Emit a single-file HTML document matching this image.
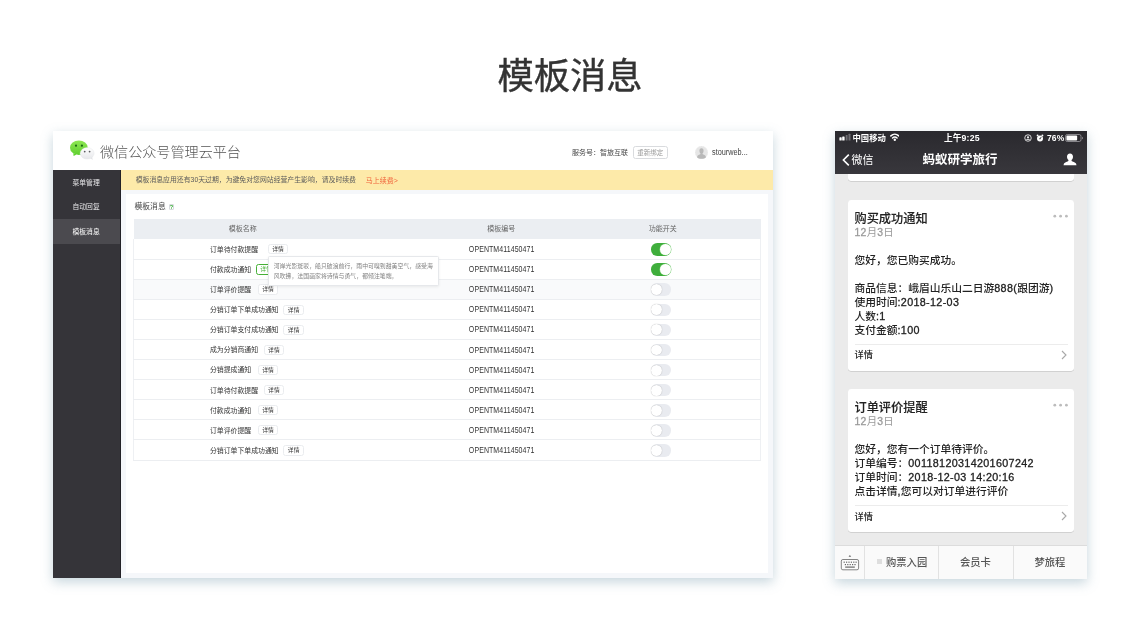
<!DOCTYPE html>
<html lang="zh-CN">
<head>
<meta charset="utf-8">
<title>模板消息</title>
<style>
*{box-sizing:border-box;margin:0;padding:0}
html,body{width:1140px;height:638px;overflow:hidden;background:#fff}
body{position:relative;font-family:"Liberation Sans","Noto Sans CJK SC",sans-serif;color:#333;-webkit-text-size-adjust:none}
.abs{position:absolute}
.t{position:absolute;white-space:nowrap;line-height:1}
h1.title{will-change:transform;position:absolute;left:0;width:1140px;top:50.7px;text-align:center;font-family:"Noto Sans CJK SC","Liberation Sans",sans-serif;font-weight:400;-webkit-text-stroke:.4px #333;font-size:36.3px;line-height:44px;color:#333;letter-spacing:0}
/* ---------- admin panel ---------- */
#admin{will-change:transform;position:absolute;left:53px;top:131px;width:720px;height:447px;background:#f5f7fa;box-shadow:0 4px 11px rgba(100,140,160,.36)}
#admin .hdr{position:absolute;left:0;top:0;width:720px;height:39px;background:#fff}
#admin .side{position:absolute;left:0;top:39px;width:68.2px;height:408px;background:#353439;border-right:0.8px solid #232227}
#admin .side div{height:24.5px;line-height:24.5px;padding:0.8px 1px 0 0;text-align:center;color:#e8e8ea;font-size:6.8px}
#admin .side div.on{background:#4b4a4f;color:#fff}
#admin .banner{position:absolute;left:68.2px;top:39px;width:651.8px;height:19.5px;background:#fdeaa9}
#admin .card{position:absolute;left:73px;top:62.7px;width:642.4px;height:379px;background:#fff}
.sm{font-size:7px}
table.tb{position:absolute;left:80.3px;top:88px;width:627.2px;table-layout:fixed;border-collapse:collapse;font-size:7px;color:#333}
table.tb th{height:20px;padding-bottom:2px;background:#ebeef2;font-weight:400;color:#666;text-align:center}
table.tb td{height:20.1px;padding-top:1px;border-bottom:1px solid #eceef1;text-align:center;vertical-align:middle}
table.tb tr.alt td{background:#f9fafb}
table.tb td.sc{padding-right:1.5px}
table.tb td.c2,table.tb th.c2{padding-left:10px}
table.tb th{white-space:nowrap}
table.tb td.nm{text-align:left;padding-left:75.7px;font-size:6.88px;border-left:1px solid #eef0f3}
table.tb td.e{border-right:1px solid #eef0f3}
.btn{display:inline-block;border:0.6px solid #eaecef;border-radius:2.5px;font-size:5.8px;line-height:8.4px;padding:0 3.4px;margin-left:6.5px;color:#333;background:#fff;vertical-align:middle;position:relative;top:-0.6px}
.btn.g{border-color:#45b035;color:#45b035}
.op{display:inline-block;transform:translate(.4px,-.5px) scaleY(1.24);letter-spacing:.08px}
.sw{display:inline-block;width:20.5px;height:12.5px;border-radius:6.25px;background:#e9ebf0;position:relative;vertical-align:middle}
.sw i{position:absolute;left:0.7px;top:0.8px;width:10.9px;height:10.9px;border-radius:50%;background:#fff;box-shadow:0 0 1px rgba(0,0,0,.35)}
.sw.on{background:#3fae3c}
.sw.on i{left:auto;right:0.7px;box-shadow:0 0 0 .5px #7fd07a}
/* ---------- phone ---------- */
#phone{will-change:transform;position:absolute;left:835px;top:131px;width:252px;height:447.5px;background:#ebebeb;overflow:hidden;box-shadow:0 4px 11px rgba(100,140,160,.36)}
#phone .top{position:absolute;left:0;top:0;width:252px;height:43px;background:linear-gradient(#2a292e,#38373c)}
#phone .pc{position:absolute;left:13px;width:226px;background:#fff;border-radius:3px;box-shadow:0 0.4px 0.6px rgba(0,0,0,.22)}
#phone .bar{position:absolute;left:0;top:414px;width:252px;height:33.5px;background:#fafafa;border-top:0.5px solid #dcdcdc}
#phone .bar .dv{position:absolute;top:0;width:1px;height:33.5px;background:#e2e2e2}
.pt{font-family:"Liberation Sans","Noto Sans CJK SC",sans-serif}
.n{letter-spacing:.34px;-webkit-text-stroke:.3px}
</style>
</head>
<body>
<h1 class="title">模板消息</h1>

<div id="admin">
  <div class="hdr">
    <svg class="abs" style="left:0;top:0" width="60" height="39" viewBox="0 0 60 39">
      <defs>
        <linearGradient id="gg" x1="0" y1="0" x2="0" y2="1"><stop offset="0" stop-color="#8ee653"/><stop offset="1" stop-color="#60d030"/></linearGradient>
        <linearGradient id="gw" x1="0" y1="0" x2="0" y2="1"><stop offset="0" stop-color="#ffffff"/><stop offset="1" stop-color="#e6e7ea"/></linearGradient>
      </defs>
      <path d="M20.300 22l0.300 3 2.900-1.600z" fill="#62d132"/>
      <ellipse cx="25.850" cy="16.700" rx="8.850" ry="7.200" fill="url(#gg)"/>
      <circle cx="23" cy="14.700" r="1.100" fill="#1c6a14"/><circle cx="28.900" cy="14.700" r="1.100" fill="#1c6a14"/>
      <path d="M37 27l2.700 2 -0.600-3.500z" fill="#e3e4e7"/>
      <ellipse cx="34.150" cy="22.300" rx="7" ry="5.800" fill="url(#gw)" stroke="#dfe1e4" stroke-width=".35"/>
      <circle cx="31.700" cy="20.600" r=".9" fill="#5b5d60"/><circle cx="36.600" cy="20.600" r=".9" fill="#5b5d60"/>
    </svg>
    <div class="t" style="left:47px;top:12.500px;font-size:14.100px;font-weight:300;color:#555;font-family:'Noto Sans CJK SC','Liberation Sans',sans-serif">微信公众号管理云平台</div>
    <div class="t sm" style="left:519px;top:18px;color:#444">服务号：智旅互联</div>
    <div class="t" style="left:580px;top:15px;width:34.500px;height:12.500px;border:0.600px solid #d9dbde;border-radius:2.500px;font-size:6.500px;line-height:11.500px;text-align:center;color:#999">重新绑定</div>
    <svg class="abs" style="left:642px;top:14.500px" width="13" height="13" viewBox="0 0 13 13">
      <circle cx="6.500" cy="6.500" r="6.400" fill="#e6e6e6"/>
      <circle cx="6.500" cy="6.500" r="6.200" fill="none" stroke="#efefef" stroke-width=".5"/>
      <ellipse cx="6.500" cy="5" rx="2.100" ry="2.700" fill="#b9b9b9"/>
      <path d="M2 11.200C2.300 9.100 4.700 9 5.500 8.100V6.800h2v1.300c.8 .9 3.200 1 3.500 3.100C9.200 13.300 3.800 13.300 2 11.200z" fill="#b9b9b9"/>
    </svg>
    <div class="t" style="left:659px;top:17.600px;font-size:7.300px;color:#444;transform:scaleY(1.12)">stourweb...</div>
  </div>

  <div class="side">
    <div>菜单管理</div>
    <div>自动回复</div>
    <div class="on">模板消息</div>
  </div>

  <div class="banner">
    <div class="t" style="left:14.500px;top:6.500px;font-size:6.860px;color:#5c5c5c">模板消息应用还有30天过期，为避免对您网站经营产生影响，请及时续费</div>
    <div class="t sm" style="left:244.500px;top:6.500px;color:#f0643c">马上续费&gt;</div>
  </div>

  <div class="card"></div>
  <div class="t" style="left:81.500px;top:71.700px;font-size:7.800px;color:#444">模板消息</div>
  <div class="t" style="left:115.500px;top:73px;width:5.800px;height:5.800px;border:0.600px solid #d5d8dc;border-radius:1px;font-size:5.600px;line-height:4.800px;text-align:center;color:#2fa82f;font-weight:700">?</div>

  <table class="tb">
    <colgroup><col style="width:218px"><col style="width:289px"><col style="width:42px"><col style="width:78px"></colgroup>
    <tr><th>模板名称</th><th class="c2">模板编号</th><th style="padding-left:2px">功能开关</th><th></th></tr>
    <tr><td class="nm">订单待付款提醒<span class="btn" style="margin-left:9.700px">详情</span></td><td class="c2"><span class="op">OPENTM411450471</span></td><td class="sc"><span class="sw on"><i></i></span></td><td class="e"></td></tr>
    <tr><td class="nm">付款成功通知<span class="btn g" style="margin-left:4.700px">详情</span></td><td class="c2"><span class="op">OPENTM411450471</span></td><td class="sc"><span class="sw on"><i></i></span></td><td class="e"></td></tr>
    <tr class="alt"><td class="nm">订单评价提醒<span class="btn">详情</span></td><td class="c2"><span class="op">OPENTM411450471</span></td><td class="sc"><span class="sw"><i></i></span></td><td class="e"></td></tr>
    <tr><td class="nm">分销订单下单成功通知<span class="btn" style="margin-left:4.700px">详情</span></td><td class="c2"><span class="op">OPENTM411450471</span></td><td class="sc"><span class="sw"><i></i></span></td><td class="e"></td></tr>
    <tr><td class="nm">分销订单支付成功通知<span class="btn" style="margin-left:4.700px">详情</span></td><td class="c2"><span class="op">OPENTM411450471</span></td><td class="sc"><span class="sw"><i></i></span></td><td class="e"></td></tr>
    <tr><td class="nm">成为分销商通知<span class="btn" style="margin-left:5.600px">详情</span></td><td class="c2"><span class="op">OPENTM411450471</span></td><td class="sc"><span class="sw"><i></i></span></td><td class="e"></td></tr>
    <tr><td class="nm">分销提成通知<span class="btn">详情</span></td><td class="c2"><span class="op">OPENTM411450471</span></td><td class="sc"><span class="sw"><i></i></span></td><td class="e"></td></tr>
    <tr><td class="nm">订单待付款提醒<span class="btn" style="margin-left:5.600px">详情</span></td><td class="c2"><span class="op">OPENTM411450471</span></td><td class="sc"><span class="sw"><i></i></span></td><td class="e"></td></tr>
    <tr><td class="nm">付款成功通知<span class="btn">详情</span></td><td class="c2"><span class="op">OPENTM411450471</span></td><td class="sc"><span class="sw"><i></i></span></td><td class="e"></td></tr>
    <tr><td class="nm">订单评价提醒<span class="btn">详情</span></td><td class="c2"><span class="op">OPENTM411450471</span></td><td class="sc"><span class="sw"><i></i></span></td><td class="e"></td></tr>
    <tr><td class="nm">分销订单下单成功通知<span class="btn" style="margin-left:4.700px">详情</span></td><td class="c2"><span class="op">OPENTM411450471</span></td><td class="sc"><span class="sw"><i></i></span></td><td class="e"></td></tr>
  </table>

  <div class="abs" style="left:214.800px;top:124.800px;width:171.500px;height:30.300px;background:#fff;border:0.500px solid #e6e8eb;border-radius:1.500px;box-shadow:0 1px 3px rgba(0,0,0,.07);font-size:5.900px;line-height:9.300px;color:#808080;padding:5.600px 5px 0;white-space:nowrap">河岸光影斑驳，船只破浪前行，雨中可嗅到甜美空气，感受海<br>风吹拂，法国画家将诗情与勇气，都倾注笔端，</div>
</div>

<div id="phone" class="pt">
  <div class="pc" style="top:40px;height:10px"></div>
  <div class="top">
    <!-- status bar -->
    <svg class="abs" style="left:3.500px;top:2.100px" width="13" height="8" viewBox="0 0 13 8">
      <rect x="0.400" y="4.300" width="2.300" height="3.200" rx=".6" fill="#fff"/>
      <rect x="3.200" y="3.400" width="2.400" height="4.100" rx=".6" fill="#fff"/>
      <rect x="6.700" y="1.900" width="1.900" height="5.600" rx=".5" fill="#6e6d72"/>
      <rect x="9.500" y="0.700" width="2" height="6.800" rx=".5" fill="#6e6d72"/>
    </svg>
    <div class="t" style="left:17.500px;top:2.900px;font-size:8.350px;font-weight:700;color:#fff">中国移动</div>
    <svg class="abs" style="left:54.700px;top:2.300px" width="9.600" height="8.200" viewBox="0 0 19 16">
      <path d="M1.700 5.600C6.200 1.200 12.800 1.200 17.300 5.600" fill="none" stroke="#fff" stroke-width="3" stroke-linecap="round"/>
      <path d="M5 9.800C7.700 7.300 11.300 7.300 14 9.800" fill="none" stroke="#fff" stroke-width="2.900" stroke-linecap="round"/>
      <circle cx="9.500" cy="13.300" r="2.400" fill="#fff"/>
    </svg>
    <div class="t" style="left:1px;width:252px;text-align:center;top:3.300px;font-size:8.700px;font-weight:700;color:#fff">上午<span style="letter-spacing:.25px">9:25</span></div>
    <svg class="abs" style="left:188.800px;top:2.700px" width="8" height="8" viewBox="0 0 16 16">
      <circle cx="8" cy="8" r="6.500" fill="none" stroke="#fff" stroke-width="1.600"/>
      <circle cx="8" cy="6.500" r="2" fill="#fff"/><path d="M4 11.500c1-2.500 7-2.500 8 0z" fill="#fff"/>
    </svg>
    <svg class="abs" style="left:200.700px;top:2.500px" width="8" height="8" viewBox="0 0 16 16">
      <circle cx="8" cy="9" r="6" fill="#fff"/><path d="M8 9.500L10.300 6.300" stroke="#2c2b30" stroke-width="1.700" stroke-linecap="round"/><circle cx="8" cy="9.500" r="1.100" fill="#2c2b30"/>
      <circle cx="3.200" cy="2.800" r="1.900" fill="#fff"/><circle cx="12.800" cy="2.800" r="1.900" fill="#fff"/>
    </svg>
    <div class="t" style="left:212px;top:3.300px;font-size:8.500px;font-weight:700;letter-spacing:.1px;color:#fff">76%</div>
    <svg class="abs" style="left:230px;top:2.700px" width="18.500" height="8" viewBox="0 0 37 16">
      <rect x="1" y="1" width="31" height="14" rx="3.500" fill="none" stroke="#a5a4a9" stroke-width="1.500"/>
      <rect x="2.800" y="3" width="21.500" height="10" rx="1.800" fill="#fff"/>
      <path d="M34 5.300c2.200 .5 2.200 4.900 0 5.400z" fill="#9a999e"/>
    </svg>
    <!-- nav bar -->
    <svg class="abs" style="left:6.500px;top:22.500px" width="8" height="12" viewBox="0 0 8 12"><path d="M6.800 0.600L1.400 6l5.400 5.400" fill="none" stroke="#fff" stroke-width="1.600"/></svg>
    <div class="t" style="left:16.500px;top:23.600px;font-size:11px;color:#fff">微信</div>
    <div class="t" style="left:-1px;width:252px;text-align:center;top:23.200px;font-size:12.500px;font-weight:700;color:#fff">蚂蚁研学旅行</div>
    <svg class="abs" style="left:228px;top:21.500px" width="14" height="13" viewBox="0 0 28 26">
      <path d="M14 1c-3.800 0-6 2.800-6 6.500 0 2.800 1.300 5.200 3 6.500 0 1.500-.5 2.500-2 3.200C5.500 18.500 1.500 19.500 1 24.500h26c-.5-5-4.500-6-8-7.300-1.500-.7-2-1.700-2-3.200 1.700-1.300 3-3.700 3-6.500C20 3.800 17.800 1 14 1z" fill="#fff"/>
    </svg>
  </div>

  <!-- card 1 -->
  <div class="pc" style="top:68.500px;height:171.500px">
    <div class="t" style="left:6.500px;top:13.5px;font-size:12.200px;font-weight:500;-webkit-text-stroke:.12px;color:#222">购买成功通知</div>
    <svg class="abs" style="left:204px;top:13.1px" width="18" height="6" viewBox="0 0 18 6"><circle cx="2.800" cy="3.200" r="1.400" fill="#bcbcbc"/><circle cx="8.600" cy="3.200" r="1.400" fill="#bcbcbc"/><circle cx="14.400" cy="3.200" r="1.400" fill="#bcbcbc"/></svg>
    <div class="t" style="left:6.500px;top:28.1px;font-size:10.400px;color:#9a9a9a"><span class="n">12</span>月<span class="n">3</span>日</div>
    <div class="t" style="left:6.500px;top:55.0px;font-size:10.750px;font-weight:500;color:#222">您好，您已购买成功。</div>
    <div class="t" style="left:6.500px;top:83.5px;font-size:10.750px;font-weight:500;color:#222">商品信息：峨眉山乐山二日游<span class="n">888(</span>跟团游<span class="n">)</span></div>
    <div class="t" style="left:6.500px;top:97.5px;font-size:10.750px;font-weight:500;color:#222">使用时间<span class="n">:2018-12-03</span></div>
    <div class="t" style="left:6.500px;top:111.5px;font-size:10.750px;font-weight:500;color:#222">人数<span class="n">:1</span></div>
    <div class="t" style="left:6.500px;top:125.5px;font-size:10.750px;font-weight:500;color:#222">支付金额<span class="n">:100</span></div>
    <div class="abs" style="left:6.500px;top:144.0px;width:213px;height:1px;background:#ececec"></div>
    <div class="t" style="left:6.500px;top:151.7px;font-size:9.200px;font-weight:500;color:#222">详情</div>
    <svg class="abs" style="left:213.300px;top:150.2px" width="6" height="10" viewBox="0 0 6 10"><path d="M1 1l4 4-4 4" fill="none" stroke="#a8a8a8" stroke-width="1.100"/></svg>
  </div>

  <!-- card 2 -->
  <div class="pc" style="top:258px;height:143.200px">
    <div class="t" style="left:6.500px;top:13.1px;font-size:12.200px;font-weight:500;-webkit-text-stroke:.12px;color:#222">订单评价提醒</div>
    <svg class="abs" style="left:204px;top:12.600px" width="18" height="6" viewBox="0 0 18 6"><circle cx="2.800" cy="3.200" r="1.400" fill="#bcbcbc"/><circle cx="8.600" cy="3.200" r="1.400" fill="#bcbcbc"/><circle cx="14.400" cy="3.200" r="1.400" fill="#bcbcbc"/></svg>
    <div class="t" style="left:6.500px;top:27.6px;font-size:10.400px;color:#9a9a9a"><span class="n">12</span>月<span class="n">3</span>日</div>
    <div class="t" style="left:6.500px;top:54.5px;font-size:10.750px;font-weight:500;color:#222">您好，您有一个订单待评价。</div>
    <div class="t" style="left:6.500px;top:68.5px;font-size:10.750px;font-weight:500;color:#222">订单编号：<span class="n">00118120314201607242</span></div>
    <div class="t" style="left:6.500px;top:83.0px;font-size:10.750px;font-weight:500;color:#222">订单时间：<span class="n">2018-12-03 14:20:16</span></div>
    <div class="t" style="left:6.500px;top:97.0px;font-size:10.750px;font-weight:500;color:#222">点击详情<span class="n">,</span>您可以对订单进行评价</div>
    <div class="abs" style="left:6.500px;top:116px;width:213px;height:1px;background:#ececec"></div>
    <div class="t" style="left:6.500px;top:123.7px;font-size:9.200px;font-weight:500;color:#222">详情</div>
    <svg class="abs" style="left:213.300px;top:122.200px" width="6" height="10" viewBox="0 0 6 10"><path d="M1 1l4 4-4 4" fill="none" stroke="#a8a8a8" stroke-width="1.100"/></svg>
  </div>

  <!-- bottom bar -->
  <div class="bar">
    <div class="dv" style="left:29px"></div>
    <div class="dv" style="left:103px"></div>
    <div class="dv" style="left:177.500px"></div>
    <svg class="abs" style="left:5px;top:7.700px" width="20" height="17" viewBox="0 0 20 17">
      <path d="M8.600 2.700L9.900 1.100l1.300 1.600z" fill="#666"/>
      <rect x="1.300" y="5.500" width="17.300" height="10.300" rx="1.600" fill="none" stroke="#666" stroke-width=".8"/>
      <g fill="#666"><rect x="3.600" y="7.600" width="1.200" height="1.200"/><rect x="6" y="7.600" width="1.200" height="1.200"/><rect x="8.400" y="7.600" width="1.200" height="1.200"/><rect x="10.800" y="7.600" width="1.200" height="1.200"/><rect x="13.200" y="7.600" width="1.200" height="1.200"/><rect x="15.500" y="7.600" width="1.200" height="1.200"/>
      <rect x="4.800" y="10" width="1.200" height="1.200"/><rect x="7.200" y="10" width="1.200" height="1.200"/><rect x="9.600" y="10" width="1.200" height="1.200"/><rect x="12" y="10" width="1.200" height="1.200"/><rect x="14.400" y="10" width="1.200" height="1.200"/>
      <rect x="5.200" y="12.500" width="9.600" height="1.200"/></g>
    </svg>
    <div class="abs" style="left:42px;top:13.200px;width:4.500px;height:4.500px;background:#dedede"></div>
    <div class="t" style="left:51px;top:11.600px;font-size:10.300px;font-weight:500;color:#555">购票入园</div>
    <div class="t" style="left:125px;top:11.600px;font-size:10.300px;font-weight:500;color:#555">会员卡</div>
    <div class="t" style="left:199.500px;top:11.600px;font-size:10.300px;font-weight:500;color:#555">梦旅程</div>
  </div>
</div>
</body>
</html>
